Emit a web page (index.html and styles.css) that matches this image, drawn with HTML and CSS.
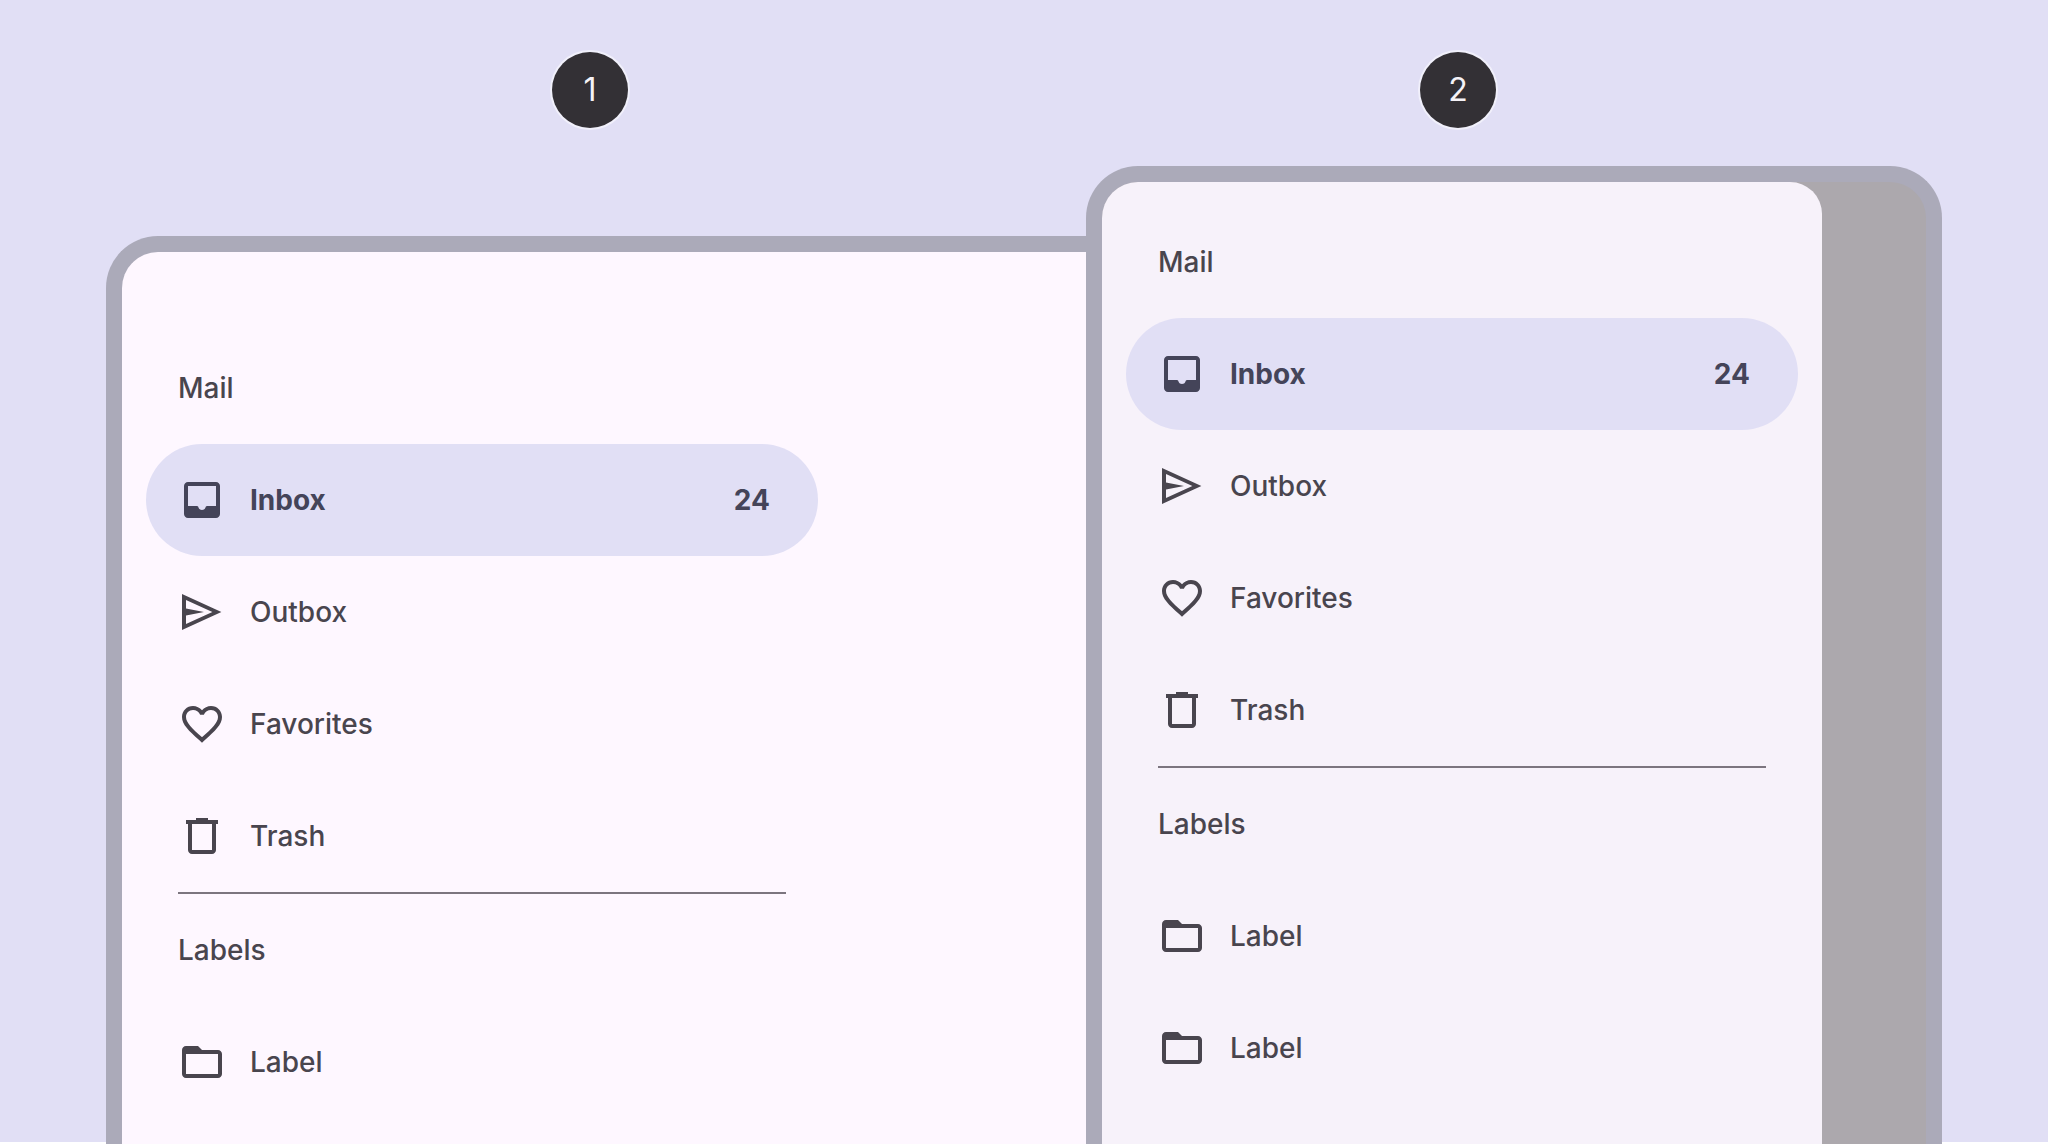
FILE: index.html
```
<!DOCTYPE html>
<html lang="en">
<head>
  <meta charset="UTF-8">
  <title>Navigation drawer</title>
  <link rel="stylesheet" href="styles.css">
</head>
<body>

  <!-- Shared icons -->
  <svg class="sprite" aria-hidden="true">
    <symbol id="inbox" viewBox="0 0 24 24">
      <path fill-rule="evenodd" d="M5 3h14c1.100 0 2 .9 2 2v14c0 1.100-.9 2-2 2H5c-1.100 0-2-.9-2-2V5c0-1.100.9-2 2-2zM5 5v10h4.500c.5 0 .6.400.8.900.3.700.9 1.100 1.700 1.100s1.400-.400 1.700-1.100c.200-.5.300-.9.800-.9H19V5z"/>
    </symbol>
    <symbol id="outbox" viewBox="0 0 24 24">
      <path fill-rule="evenodd" d="M2 3l19.700 9L2 21zM4 6v4.300l9 1.700-9 1.700V18l13.200-6z"/>
    </symbol>
    <symbol id="heart" viewBox="0 0 24 24">
      <path d="M16.500 3c-1.740 0-3.410.81-4.500 2.090C10.910 3.810 9.240 3 7.500 3 4.420 3 2 5.420 2 8.500c0 3.780 3.400 6.860 8.550 11.540L12 21.350l1.450-1.320C18.600 15.360 22 12.280 22 8.500 22 5.420 19.580 3 16.500 3zm-4.400 15.550l-.1.100-.1-.100C7.140 14.240 4 11.390 4 8.500 4 6.500 5.500 5 7.500 5c1.540 0 3.040.99 3.570 2.360h1.870C13.460 5.990 14.960 5 16.500 5c2 0 3.500 1.500 3.500 3.500 0 2.890-3.140 5.740-7.900 10.050z"/>
    </symbol>
    <symbol id="trash" viewBox="0 0 24 24">
      <path fill-rule="evenodd" d="M9 3h6v1h5v2h-1v13c0 1.100-.9 2-2 2H7c-1.100 0-2-.9-2-2V6H4V4h5zM7 6v13h10V6z"/>
    </symbol>
    <symbol id="folder" viewBox="0 0 24 24">
      <path fill-rule="evenodd" d="M4 4h6l2 2h8c1.100 0 2 .9 2 2v10c0 1.100-.9 2-2 2H4c-1.100 0-2-.9-2-2V6c0-1.100.9-2 2-2zM4 8v10h16V8z"/>
    </symbol>
  </svg>

  <main class="stage">
    <section class="example standard">
      <div class="marker">1</div>
      <div class="frame">
        <nav class="drawer" aria-label="Standard drawer">
          <h2>Mail</h2>
          <a class="item active" href="#inbox1"><svg><use href="#inbox"/></svg>Inbox<span class="badge">24</span></a>
          <a class="item" href="#outbox1"><svg><use href="#outbox"/></svg>Outbox</a>
          <a class="item" href="#favorites1"><svg><use href="#heart"/></svg>Favorites</a>
          <a class="item" href="#trash1"><svg><use href="#trash"/></svg>Trash</a>
          <hr>
          <h2>Labels</h2>
          <a class="item" href="#label1"><svg><use href="#folder"/></svg>Label</a>
        </nav>
      </div>
    </section>

    <section class="example modal">
      <div class="marker">2</div>
      <div class="frame">
        <nav class="drawer" aria-label="Modal drawer">
          <h2>Mail</h2>
          <a class="item active" href="#inbox2"><svg><use href="#inbox"/></svg>Inbox<span class="badge">24</span></a>
          <a class="item" href="#outbox2"><svg><use href="#outbox"/></svg>Outbox</a>
          <a class="item" href="#favorites2"><svg><use href="#heart"/></svg>Favorites</a>
          <a class="item" href="#trash2"><svg><use href="#trash"/></svg>Trash</a>
          <hr>
          <h2>Labels</h2>
          <a class="item" href="#label2"><svg><use href="#folder"/></svg>Label</a>
          <a class="item" href="#label3"><svg><use href="#folder"/></svg>Label</a>
        </nav>
      </div>
    </section>
  </main>

</body>
</html>
```
FILE: styles.css
```
* {
  box-sizing: border-box;
}

body {
  margin: 0;
  font-family: Inter, Roboto, sans-serif;
  font-size: 28px;
  font-weight: 500;
  color: #49454e;
  background-color: #ffffff;
}

.sprite {
  display: none;
}

.stage {
  display: flex;
  min-height: 100vh;
  padding: 52px 106px 0;
  background: linear-gradient(#e1dff5, #e1dff5) top / 100% calc(100% - 2px) no-repeat;
}

.example {
  display: flex;
  flex-direction: column;
  align-items: center;
}

.standard {
  flex: 1;
  gap: 108px;
}

.modal {
  flex: 0 0 856px;
  gap: 38px;
}

.marker {
  width: 76px;
  height: 76px;
  border-radius: 50%;
  box-shadow: 0 0 0 2px #f1f0fb;
  background-color: #333035;
  color: #f5f2f7;
  font-weight: 400;
  font-size: 32px;
  line-height: 76px;
  text-align: center;
}

.standard .marker {
  margin-right: 12px;
}

.modal .marker {
  margin-right: 112px;
}

.frame {
  flex: 1;
  width: 100%;
  border: 16px solid #abaab9;
  border-bottom: 0;
}

.standard .frame {
  border-right: 0;
  border-top-left-radius: 52px;
  background-color: #fef7ff;
}

.modal .frame {
  border-radius: 52px 52px 0 0;
  background-color: #aca8ad;
}

.drawer {
  width: 720px;
  height: 100%;
  padding: 24px 24px 0;
}

.standard .drawer {
  padding-top: 80px;
}

.modal .drawer {
  border-radius: 36px 32px 0 0;
  background-color: #f7f2fa;
}

h2 {
  margin: 0;
  padding-left: 32px;
  font-size: 28px;
  font-weight: 500;
  line-height: 112px;
}

.item {
  display: flex;
  align-items: center;
  gap: 24px;
  height: 112px;
  padding: 0 48px 0 32px;
  border-radius: 56px;
  color: #49454e;
  text-decoration: none;
}

.item svg {
  width: 48px;
  height: 48px;
  fill: currentColor;
}

.active {
  background-color: #e1dff5;
  color: #444459;
  font-weight: 700;
}

.badge {
  margin-left: auto;
}

hr {
  height: 2px;
  margin: 0 32px;
  border: 0;
  background-color: #7c757f;
}
```
